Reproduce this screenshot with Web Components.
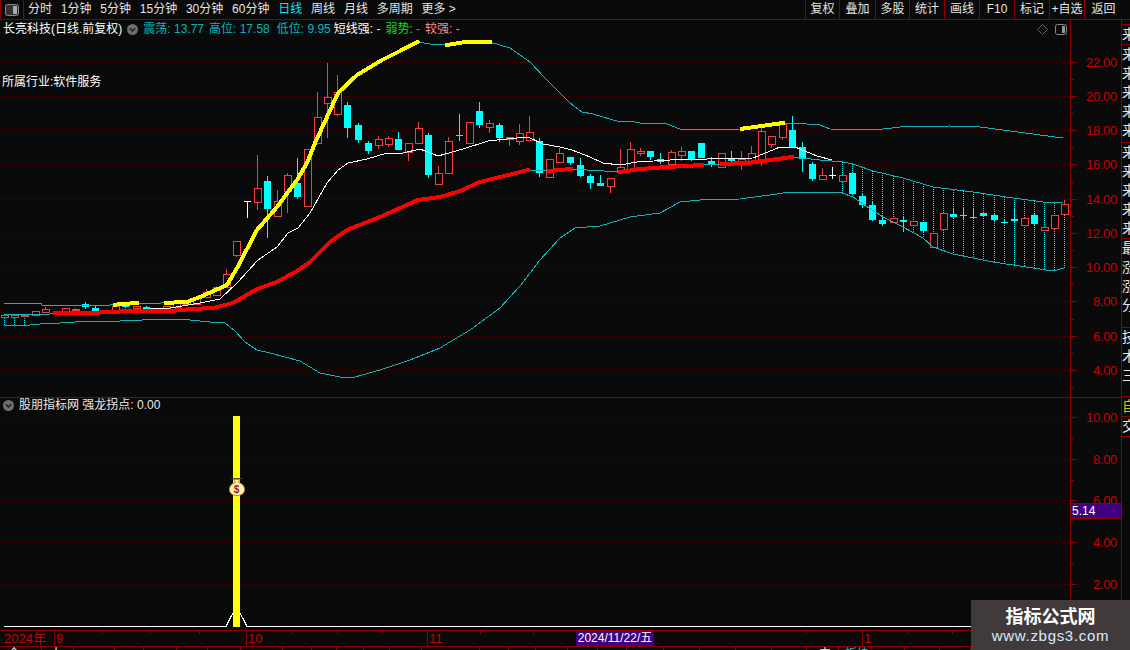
<!DOCTYPE html>
<html lang="zh">
<head>
<meta charset="utf-8">
<title>长亮科技</title>
<style>
  html, body { margin: 0; background: #0a0a0a; overflow: hidden; }
</style>
</head>
<body>
<stock-app></stock-app>

<script>
const FONT = '"Liberation Sans", "Noto Sans CJK SC", sans-serif';
const LINE_RED = '#8b0000';
const pts = (list) => list.map((p) => p.join(',')).join(' ');

// y value of a polyline at x
function yAt(line, x) {
  for (let i = 1; i < line.length; i++) {
    if (x <= line[i][0]) {
      const [x0, y0] = line[i - 1];
      const [x1, y1] = line[i];
      return y0 + (y1 - y0) * (x - x0) / (x1 - x0);
    }
  }
  return line[line.length - 1][1];
}

// x, wick top, body top, body bottom, wick bottom, colour
const candles = [
  [4,315,315,317,317,'r'],[14,315,315,317,317,'r'],[24,315,315,316,316,'r'],[35,311,311,315,315,'r'],
  [45,307,309,312,312,'r'],[65,308,308,312,312,'r'],[75,308,309,310,312,'r'],[85,302,304,307,309,'c'],
  [95,306,308,311,311,'c'],[105,310,310,311,311,'r'],[115,306,306,310,310,'r'],[125,306,306,307,308,'c'],
  [136,306,306,308,308,'r'],[146,306,307,309,309,'c'],[166,306,306,309,309,'r'],[176,303,303,307,307,'r'],
  [186,301,302,304,305,'r'],[196,298,298,304,304,'r'],[206,289,292,297,297,'r'],[216,287,287,295,295,'r'],
  [226,269,274,287,287,'r'],[236,241,241,255,257,'r'],[247,201,201,202,218,'w'],[257,155,188,202,210,'r'],
  [267,176,181,209,238,'c'],[277,190,201,216,216,'r'],[287,173,175,191,213,'r'],[297,158,183,197,199,'c'],
  [307,149,149,206,207,'r'],[317,92,117,143,143,'r'],[327,63,97,103,138,'r'],[337,75,92,114,116,'r'],
  [347,102,105,128,138,'c'],[358,123,125,140,143,'c'],[368,141,143,151,154,'c'],[378,136,139,145,149,'r'],
  [388,136,138,144,147,'r'],[398,132,139,150,150,'c'],[408,143,143,152,161,'r'],[418,122,128,143,143,'r'],
  [428,133,135,175,178,'c'],[438,166,173,184,184,'r'],[448,137,141,173,174,'r'],[459,114,135,136,141,'c'],
  [469,122,122,143,143,'r'],[479,102,111,125,128,'c'],[489,120,123,127,133,'r'],[499,123,125,138,142,'c'],
  [509,137,137,139,146,'r'],[519,124,133,141,145,'r'],[529,116,132,140,140,'r'],[539,138,141,173,177,'c'],
  [549,159,159,177,178,'r'],[559,148,153,162,163,'r'],[570,157,157,163,165,'c'],[580,158,165,176,177,'c'],
  [590,174,176,183,189,'c'],[600,175,183,186,186,'c'],[610,178,178,186,193,'r'],[620,149,167,172,172,'r'],
  [630,142,149,169,169,'r'],[640,148,151,153,156,'r'],[650,151,151,157,160,'c'],[660,153,159,162,164,'c'],
  [671,150,152,164,164,'r'],[681,147,151,155,161,'r'],[691,151,151,160,161,'c'],[701,143,143,158,158,'c'],
  [711,157,161,165,167,'c'],[721,153,153,167,167,'r'],[731,151,158,161,162,'c'],[741,151,159,163,170,'r'],
  [751,146,153,162,162,'r'],[761,128,131,159,166,'r'],[771,136,136,144,148,'r'],[782,124,124,137,140,'r'],
  [792,116,130,147,147,'c'],[802,142,147,159,172,'c'],[812,162,164,179,181,'c'],[822,168,175,179,179,'r'],
  [832,167,175,176,179,'w'],[842,175,175,181,181,'r'],[852,173,173,194,194,'c'],[862,193,196,205,208,'c'],
  [872,201,205,220,221,'c'],[882,216,220,224,226,'c'],[893,218,218,222,222,'r'],[903,216,220,222,232,'c'],
  [913,221,221,225,225,'r'],[923,222,222,231,232,'c'],[933,233,233,247,247,'r'],[943,213,213,229,230,'r'],
  [953,209,214,217,219,'c'],[963,208,215,216,220,'c'],[973,209,217,218,219,'c'],[983,212,213,216,217,'c'],
  [994,214,215,220,222,'c'],[1004,219,222,223,224,'c'],[1014,208,219,221,222,'c'],[1024,218,218,225,225,'r'],
  [1034,213,215,224,225,'c'],[1044,227,227,230,230,'r'],[1054,215,215,228,228,'r'],[1064,200,204,214,214,'r']
];

const upper = [[4,303],[41,303],[42,305],[110,305],[137,303],[161,303],[187,302],[200,297],[227,285],[237,268],
  [257,230],[277,207],[297,180],[307,163],[315,143],[327,117],[338,93],[357,75],[382,60],[400,51],[418,42],
  [430,44],[447,45],[465,42],[490,42],[510,48],[530,62],[545,78],[557,90],[570,103],[582,112],[593,114],
  [620,122],[630,121],[640,123],[660,123],[667,124],[680,129],[690,130],[740,129],[783,123],[793,123],
  [807,124],[820,125],[830,129],[875,130],[900,127],[950,126],[980,127],[1010,131],[1040,135],[1063,138]];

const middle = [[4,314],[50,314],[55,313],[90,313],[130,311],[170,311],[192,309],[213,308],[233,303],[257,289],
  [277,282],[297,271],[310,262],[330,242],[347,230],[380,217],[400,208],[418,200],[440,197],[460,191],
  [480,182],[500,177],[528,170],[549,171],[571,169],[620,172],[640,169],[667,167],[702,165],[722,164],
  [747,163],[763,161],[792,157],[820,160],[843,162],[853,164],[873,171],[903,178],[933,187],[973,192],
  [1013,198],[1043,202],[1063,203]];

const lower = [[4,325],[30,325],[40,324],[60,323],[90,321],[120,321],[165,319],[190,320],[210,322],[225,323],
  [235,331],[245,342],[257,350],[270,353],[285,357],[300,361],[320,373],[340,377],[355,377],[380,370],
  [410,360],[440,348],[470,330],[500,308],[520,286],[540,260],[560,238],[575,228],[600,226],[630,217],
  [660,213],[680,202],[700,200],[740,199],[770,195],[790,192],[823,193],[837,192],[842,193],[853,197],
  [863,204],[883,217],[903,227],[923,238],[933,247],[953,254],[973,258],[993,262],[1013,265],[1033,268],
  [1053,271],[1064,268]];

const whiteLine = [[80,312],[130,310],[170,308],[200,303],[220,299],[237,283],[258,260],[277,247],[288,233],
  [298,228],[310,213],[327,183],[338,170],[348,163],[367,159],[387,153],[403,153],[420,149],[438,156],
  [463,149],[488,141],[507,139],[528,137],[543,144],[560,147],[572,150],[590,157],[603,163],[620,165],
  [637,162],[687,159],[707,159],[753,158],[780,147],[795,147],[817,156],[832,160]];

const slice = (line, a, b) => [[a, yAt(line, a)], ...line.filter((p) => p[0] > a && p[0] < b), [b, yAt(line, b)]];

const yellowParts = [[115,137],[166,418],[447,490],[742,783]].map(([a, b]) => slice(upper, a, b));
const redParts = [[55,528],[549,571],[620,702],[722,792]].map(([a, b]) => slice(middle, a, b));

class ToolBtn extends HTMLElement {
  constructor() {
    super();
    this.attachShadow({ mode: 'open' });
    this.shadowRoot.innerHTML = `
      <style>
        :host { display: block; color: #e4e4e4; font: 12px/19px ${FONT}; white-space: nowrap; }
        :host([active]) { color: #00e5ff; }
        :host([boxed]) { box-sizing: border-box; border-left: 1px solid ${LINE_RED}; text-align: center; }
      </style>
      <slot></slot>`;
  }
}

class ToolBar extends HTMLElement {
  constructor() {
    super();
    this.attachShadow({ mode: 'open' });
    const left = [['分时',0],['1分钟',0],['5分钟',0],['15分钟',0],['30分钟',0],['60分钟',0],['日线',1],['周线',0],['月线',0],['多周期',0],['更多 &gt;',0]];
    const right = [['复权',34],['叠加',36],['多股',34],['统计',35],['画线',35],['F10',35],['标记',35],['+自选',35],['返回',46]];
    this.shadowRoot.innerHTML = `
      <style>
        :host { display: flex; height: 19px; border-bottom: 1px solid ${LINE_RED}; }
        .icon { box-sizing: border-box; width: 24px; height: 19px; border: 1px solid ${LINE_RED}; border-top: 0; border-bottom: 0; display: flex; align-items: center; justify-content: center; }
        .left { display: flex; gap: 8.8px; margin-left: 4px; flex: 1; }
        .right { display: flex; }
        .right tool-btn:last-child { padding-right: 8px; }
      </style>
      <div class="icon"><svg width="14" height="12" viewBox="0 0 14 12"><rect x="0.5" y="0.5" width="13" height="11" rx="2" fill="#333" stroke="#888"/><rect x="8" y="2" width="4" height="8" fill="#aaa"/></svg></div>
      <div class="left">${left.map(([t, a]) => `<tool-btn ${a ? 'active' : ''}>${t}</tool-btn>`).join('')}</div>
      <div class="right">${right.map(([t, w]) => `<tool-btn boxed style="width:${w}px">${t}</tool-btn>`).join('')}</div>`;
  }
}

class KlinePanel extends HTMLElement {
  constructor() {
    super();
    this.attachShadow({ mode: 'open' });
  }

  connectedCallback() {
    const grid = [62,96,130,164,199,233,267,301,336,370]
      .map((y) => `<line x1="0" x2="1070" y1="${y}.5" y2="${y}.5" stroke="#660000" stroke-dasharray="1 3"/>`).join('');
    const dots = [];
    for (const c of candles) {
      if (c[0] >= 842) dots.push([c[0], yAt(middle, c[0]), yAt(lower, c[0])]);
      if (c[0] <= 24) dots.push([c[0], 316, 325]);
    }
    const dotted = dots.map(([x, a, b]) => `<line x1="${x}.5" x2="${x}.5" y1="${a}" y2="${b}" stroke="#00f0f0" stroke-dasharray="1 1"/>`).join('');
    const bars = candles.map(([x, wt, bt, bb, wb, k]) => {
      if (k === 'w') {
        return `<path d="M${x}.5 ${wt}V${wb}M${x - 3} ${bt}.5H${x + 4}" stroke="#fff" fill="none"/>`;
      }
      const col = k === 'c' ? '#00ffff' : '#f24040';
      const wick = `<line x1="${x}.5" x2="${x}.5" y1="${wt}" y2="${wb}" stroke="${col}"/>`;
      if (k === 'c') return `${wick}<rect x="${x - 3}" y="${bt}" width="7" height="${Math.max(bb - bt, 1)}" fill="${col}"/>`;
      return `${wick}<rect x="${x - 3}.5" y="${bt}.5" width="7" height="${Math.max(bb - bt, 1)}" fill="#0a0a0a" stroke="${col}"/>`;
    }).join('');
    const teal = (line) => `<polyline points="${pts(line)}" fill="none" stroke="#14b4b8"/>`;
    const thick = (line, col, w) => `<polyline points="${pts(line)}" fill="none" stroke="${col}" stroke-width="${w}" stroke-linecap="square"/>`;

    this.shadowRoot.innerHTML = `
      <style>
        :host { display: block; position: relative; height: 378px; box-sizing: border-box; border-bottom: 1px solid ${LINE_RED}; color: #fff; font: 12px/18px ${FONT}; }
        svg.plot { position: absolute; inset: 0; }
        .legend { position: relative; display: flex; align-items: center; padding-left: 3px; height: 18px; white-space: nowrap; }
        .legend .sec { color: #00b8bc; }
        .legend svg { margin: 0 5px 0 5px; }
        .legend span { margin-right: 5px; }
        .industry { position: relative; margin: 35px 0 0 2px; }
        .tools { position: absolute; top: 4px; right: 3px; display: flex; gap: 7px; align-items: center; }
      </style>
      <svg class="plot" width="1070" height="377" viewBox="0 20 1070 377" shape-rendering="crispEdges">
        ${grid}${dotted}${bars}
        ${teal(upper)}${teal(middle)}${teal(lower)}
        ${thick(whiteLine, '#fff', 1)}
        ${thick([[80,313],[165,311]], '#fff', 2)}
        ${redParts.map((l) => thick(l, '#ff0000', 4)).join('')}
        ${yellowParts.map((l) => thick(l, '#ffff00', 4)).join('')}
      </svg>
      <div class="legend">
        <span style="margin:0">长亮科技(日线.前复权)</span>
        <svg width="11" height="11" viewBox="0 0 11 11"><circle cx="5.5" cy="5.5" r="5.5" fill="#6e6e6e"/><path d="M2.8 4.2 5.5 7 8.2 4.2" fill="none" stroke="#1c1c1c" stroke-width="1.4"/></svg>
        <span class="sec">震荡: 13.77</span>
        <span class="sec">高位: 17.58</span>
        <span class="sec" style="margin-left:2px;margin-right:3px">低位: 9.95</span>
        <span>短线强: -</span>
        <span style="color:#00e600">弱势: -</span>
        <span style="color:#ff8a8a">较强: -</span>
      </div>
      <div class="industry">所属行业:软件服务</div>
      <div class="tools">
        <svg width="11" height="11" viewBox="0 0 11 11"><path d="M5.5 .5 10.5 5.5 5.5 10.5 .5 5.5Z" fill="none" stroke="#666"/></svg>
        <svg width="12" height="11" viewBox="0 0 12 11"><rect x=".5" y=".5" width="11" height="10" rx="2" fill="none" stroke="#888"/><rect x="7" y="2" width="3" height="7" fill="#999"/></svg>
      </div>`;
  }
}

class ScaleAxis extends HTMLElement {
  constructor() {
    super();
    this.attachShadow({ mode: 'open' });
  }

  connectedCallback() {
    const top = Number(this.getAttribute('top'));
    const h = Number(this.getAttribute('height'));
    const marks = JSON.parse(this.getAttribute('marks'));
    let out = '';
    marks.forEach(([y, label], i) => {
      out += `<path d="M0 ${y}.5H6" stroke="${LINE_RED}"/>`;
      out += `<text x="46" y="${y + 5}" text-anchor="end">${label}</text>`;
      const next = marks[i + 1] ? marks[i + 1][0] : y + (y - marks[i - 1][0]);
      out += `<path d="M0 ${Math.round((y + next) / 2)}.5H3" stroke="${LINE_RED}"/>`;
    });
    this.shadowRoot.innerHTML = `
      <style>
        :host { display: block; position: relative; box-sizing: border-box; height: ${h}px; border-left: 1px solid ${LINE_RED}; border-bottom: 1px solid ${LINE_RED}; }
        text { fill: #c80000; font: 13px ${FONT}; letter-spacing: -.3px; }
        svg { display: block; }
      </style>
      <svg width="50" height="${h - 1}" viewBox="0 ${top} 50 ${h - 1}" shape-rendering="crispEdges">${out}</svg>
      <slot></slot>`;
  }
}

class PriceTag extends HTMLElement {
  constructor() {
    super();
    this.attachShadow({ mode: 'open' });
    this.shadowRoot.innerHTML = `
      <style>
        :host { position: absolute; left: 0; right: 0; top: 105px; height: 14px; padding-left: 1px; background: #400080; border-top: 1px solid ${LINE_RED}; border-bottom: 1px solid ${LINE_RED}; color: #fff; font: 12px/14px ${FONT}; }
      </style>
      <slot></slot>`;
  }
}

class SideTabs extends HTMLElement {
  constructor() {
    super();
    this.attachShadow({ mode: 'open' });
    const secs = [[4,''],[19,'来'],[97,'来来来来来'],[95,'来来来来来'],[88,'最涨涨分'],[68,'技术三']];
    this.shadowRoot.innerHTML = `
      <style>
        :host { display: block; grid-row: span 2; box-sizing: border-box; overflow: hidden; border-left: 1px solid ${LINE_RED}; color: #e8e8e8; font: 14px/19px ${FONT}; }
        .row { box-sizing: content-box; width: 8px; overflow: hidden; border-bottom: 1px solid ${LINE_RED}; }
        .row span { display: block; width: 14px; word-break: break-all; }
      </style>
      ${secs.map(([h, t]) => `<div class="row" style="height:${h}px"><span>${t}</span></div>`).join('')}
      <div class="row" style="height:19px;color:#c8c800"><span>自</span></div>
      <div class="row" style="height:19px"><span>交</span></div>`;
  }
}

class IndicatorPanel extends HTMLElement {
  constructor() {
    super();
    this.attachShadow({ mode: 'open' });
    const grid = [417,459,500,542,584]
      .map((y) => `<line x1="0" x2="1070" y1="${y}.5" y2="${y}.5" stroke="#660000" stroke-dasharray="1 3"/>`).join('');
    this.shadowRoot.innerHTML = `
      <style>
        :host { display: block; position: relative; height: 232px; color: #e8e8e8; font: 12px/15px ${FONT}; }
        svg.plot { position: absolute; inset: 0; }
        .legend { position: relative; display: flex; align-items: center; gap: 5px; padding: 0 0 0 3px; height: 15px; white-space: nowrap; }
        .bag { font: bold 10px ${FONT}; fill: #8a2a2a; }
      </style>
      <svg class="plot" width="1070" height="232" viewBox="0 398 1070 232">
        <g shape-rendering="crispEdges">
          ${grid}
          <path d="M4 626.5H226L233 613M240 613 247 626.5H1070" fill="none" stroke="#fff" stroke-width="1.2"/>
          <rect x="233" y="416" width="7" height="211" fill="#ffff00"/>
          <rect x="231" y="478" width="11" height="1" fill="#5a4a00"/>
        </g>
        <path d="M233.500 479.500h6l-1 3c3.500 1 6 3.500 6 7 0 4-3.300 6-7.500 6s-7.500-2-7.500-6c0-3.500 2.500-6 6-7z" fill="#fff0b4" stroke="#c9821e"/>
        <text class="bag" x="236.600" y="493" text-anchor="middle">$</text>
      </svg>
      <div class="legend">
        <svg width="11" height="11" viewBox="0 0 11 11"><circle cx="5.5" cy="5.5" r="5.5" fill="#6e6e6e"/><path d="M2.8 4.200 5.500 7 8.200 4.200" fill="none" stroke="#1c1c1c" stroke-width="1.400"/></svg>
        <span>股朋指标网 强龙拐点: 0.00</span>
      </div>`;
  }
}

class DateAxis extends HTMLElement {
  constructor() {
    super();
    this.attachShadow({ mode: 'open' });
    const segs = [['2024年',54,0],['9',192,1],['10',181,1],['11',435,1],['1',268,1]];
    const ticks = [102,150,199,291,337,382,480,533,806,907,952]
      .map((x) => `<path d="M${x}.5 0V3" stroke="${LINE_RED}"/>`).join('');
    this.shadowRoot.innerHTML = `
      <style>
        :host { display: flex; position: relative; grid-column: 1 / -1; height: 17px; box-sizing: border-box; border-top: 1px solid ${LINE_RED}; border-bottom: 1px solid ${LINE_RED}; color: #c80000; font: 13px/15px ${FONT}; }
        .seg { box-sizing: border-box; padding-left: 4px; flex: none; }
        .seg.mark { border-left: 1px solid ${LINE_RED}; padding-left: 1px; }
        svg { position: absolute; left: 0; top: 0; }
        .now { position: absolute; left: 576px; top: 0; width: 78px; height: 15px; background: #400080; color: #fff; text-align: center; font-size: 12px; white-space: nowrap; }
      </style>
      ${segs.map(([t, w, m]) => `<div class="seg ${m ? 'mark' : ''}" style="width:${w}px">${t}</div>`).join('')}
      <svg width="1130" height="4" shape-rendering="crispEdges">${ticks}</svg>
      <div class="now">2024/11/22/五</div>`;
  }
}

class BottomTabs extends HTMLElement {
  constructor() {
    super();
    this.attachShadow({ mode: 'open' });
    const edges = [42,74,115,144,177,208,241,283,312,337,364,390,422,480,509,536,568,598,627,664,700,736,772,807,839,872,905,940,971];
    const labels = { 0: ['全', '#eee', 8], 1: ['十', '#eee', 8], 24: ['中', '#eee', 12], 25: ['板块', '#00d8e0', 6] };
    let prev = 0;
    const tabs = edges.map((e, i) => {
      const [t, c, p] = labels[i] || ['', '#eee', 0];
      const out = `<div style="width:${e - prev}px;color:${c};padding-left:${p}px">${t}</div>`;
      prev = e;
      return out;
    }).join('');
    this.shadowRoot.innerHTML = `
      <style>
        :host { display: flex; grid-column: 1 / -1; height: 3px; overflow: hidden; font: 12px/14px ${FONT}; }
        div { box-sizing: border-box; flex: none; height: 14px; border-right: 1px solid ${LINE_RED}; }
      </style>
      ${tabs}`;
  }
}

class WaterMark extends HTMLElement {
  constructor() {
    super();
    this.attachShadow({ mode: 'open' });
    this.shadowRoot.innerHTML = `
      <style>
        :host { position: absolute; left: 971px; top: 600px; width: 159px; height: 50px; background: #413a3a; text-align: center; }
        .name { color: #fff; font: bold 18px/20px "Noto Sans CJK SC", sans-serif; margin-top: 5px; }
        .url { color: #d4ebff; font: 15px/20px "Liberation Sans", sans-serif; letter-spacing: .7px; margin-top: 1px; }
      </style>
      <div class="name">指标公式网</div>
      <div class="url">www.zbgs3.com</div>`;
  }
}

class StockApp extends HTMLElement {
  constructor() {
    super();
    this.attachShadow({ mode: 'open' });
    this.shadowRoot.innerHTML = `
      <style>
        :host { display: block; position: relative; width: 1130px; height: 650px; background: #0a0a0a; overflow: hidden; }
        .body { display: grid; grid-template-columns: 1070px 51px 9px; grid-template-rows: 378px 232px 17px 3px; }
        tool-bar, date-axis, bottom-tabs { grid-column: 1 / -1; }
      </style>
      <tool-bar></tool-bar>
      <div class="body">
        <kline-panel></kline-panel>
        <scale-axis top="20" height="378" marks='[[62,"22.00"],[96,"20.00"],[130,"18.00"],[164,"16.00"],[199,"14.00"],[233,"12.00"],[267,"10.00"],[301,"8.00"],[336,"6.00"],[370,"4.00"]]'></scale-axis>
        <side-tabs></side-tabs>
        <indicator-panel></indicator-panel>
        <scale-axis top="398" height="232" marks='[[417,"10.00"],[459,"8.00"],[500,"6.00"],[542,"4.00"],[584,"2.00"]]'><price-tag>5.14</price-tag></scale-axis>
        <date-axis></date-axis>
        <bottom-tabs></bottom-tabs>
      </div>
      <water-mark></water-mark>`;
  }
}

customElements.define('tool-btn', ToolBtn);
customElements.define('tool-bar', ToolBar);
customElements.define('kline-panel', KlinePanel);
customElements.define('scale-axis', ScaleAxis);
customElements.define('price-tag', PriceTag);
customElements.define('side-tabs', SideTabs);
customElements.define('indicator-panel', IndicatorPanel);
customElements.define('date-axis', DateAxis);
customElements.define('bottom-tabs', BottomTabs);
customElements.define('water-mark', WaterMark);
customElements.define('stock-app', StockApp);
</script>
</body>
</html>
